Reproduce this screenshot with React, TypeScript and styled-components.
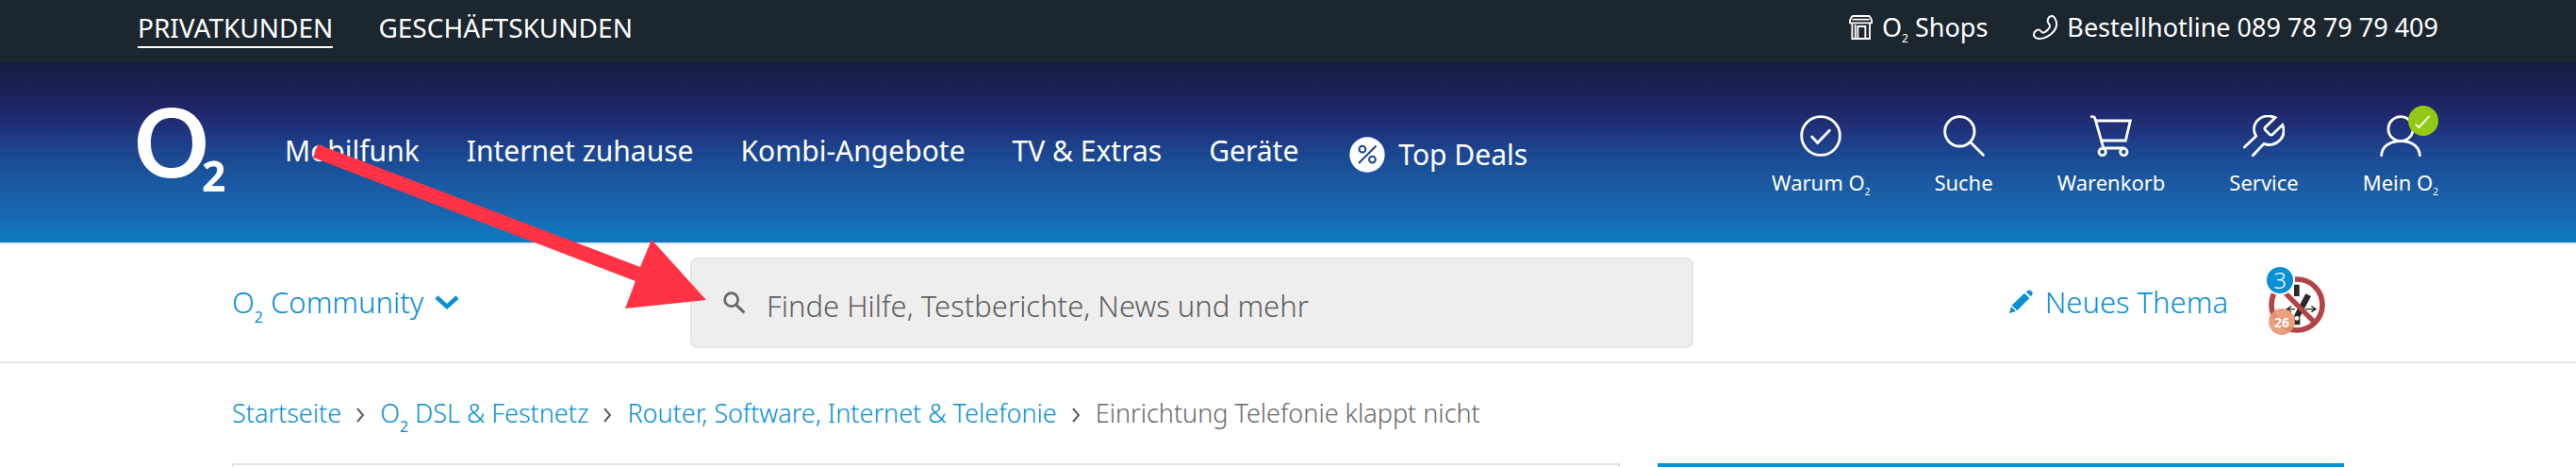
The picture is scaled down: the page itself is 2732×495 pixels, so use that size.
import React from "react";
import styled, { createGlobalStyle, css } from "styled-components";

const BLUE = "#0890d0";
const GREY = "#696969";
const LINE = "#e4e4e4";

const GlobalStyle = createGlobalStyle`
  *, *::before, *::after { box-sizing: border-box; }
  body {
    margin: 0;
    background: #fff;
    font-family: "Noto Sans", "Open Sans", sans-serif;
    font-weight: 400;
    overflow-x: hidden;
  }
  a { color: inherit; text-decoration: none; white-space: nowrap; }
  svg { display: block; flex: none; }
`;

const Container = styled.div<{ $max: number }>`
  width: calc(100% - 32px);
  max-width: ${(p) => p.$max}px;
  margin: 0 auto;
`;

const Sub = styled.span<{ $size: number; $drop: number }>`
  font-size: ${(p) => p.$size}px;
  font-weight: 400;
  line-height: 0;
  vertical-align: -${(p) => p.$drop}px;
`;

/* Top bar */

const TopBar = styled.div`
  background: #1b262f;
  color: #fff;
`;

const TopBarRow = styled(Container)`
  display: flex;
  justify-content: space-between;
  padding: 11px 0 15px;
`;

const TopBarGroup = styled.nav<{ $size: number }>`
  display: flex;
  gap: 48px;
  font-size: ${(p) => p.$size}px;
`;

const TopBarLink = styled.a<{ $active?: boolean }>`
  display: flex;
  align-items: center;
  gap: 10px;
  line-height: 36px;
  padding-bottom: 2px;
  border-bottom: 2px solid ${(p) => (p.$active ? "#fff" : "transparent")};
`;

/* Main header */

const Header = styled.header`
  color: #fff;
  background: linear-gradient(
    #161c40 0%,
    #1d2053 15%,
    #1f2363 23%,
    #1f317a 36%,
    #1c4690 50%,
    #1a5aa3 68%,
    #1867b0 84%,
    #0f76bc 94%,
    #0f78bd 100%
  );
  border-bottom: 2px solid #d8e9f4;
`;

const HeaderRow = styled(Container)`
  position: relative;
  display: flex;
  align-items: flex-start;
  padding: 46px 0 48px;
`;

const LogoLink = styled.a`
  padding-top: 2px;
  margin-right: 56px;
`;

const MainNav = styled.nav`
  display: flex;
  gap: 50px;
  padding-top: 28px;
`;

const navText = css`
  font-size: 30px;
`;

const NavLink = styled.a`
  ${navText}
  line-height: 40px;
`;

const DealsLink = styled.a`
  ${navText}
  display: flex;
  align-items: center;
  gap: 14px;
  line-height: 48px;
  padding-left: 4px;
`;

const Actions = styled.nav`
  display: flex;
  gap: 68px;
  margin-left: auto;
  padding-top: 10px;
`;

const Action = styled.a`
  display: flex;
  flex-direction: column;
  align-items: center;
  gap: 11px;
  font-size: 22px;
  line-height: 32px;
`;

const ActionIcon = styled.span`
  position: relative;
`;

const DoneBadge = styled.span`
  position: absolute;
  top: -10px;
  right: -18px;
`;

const Arrow = styled.svg`
  position: absolute;
  z-index: 2;
  left: 186px;
  top: 86px;
  pointer-events: none;
`;

/* Community bar */

const CommunityBar = styled.div`
  border-bottom: 2px solid ${LINE};
`;

const CommunityRow = styled(Container)`
  display: grid;
  grid-template-columns: 486px minmax(0, 1064px) 1fr;
  align-items: center;
  padding: 14px 0;
`;

const CommunityButton = styled.button`
  display: flex;
  align-items: center;
  justify-self: start;
  gap: 12px;
  border: 0;
  background: none;
  padding: 0 0 2px;
  font: inherit;
  font-size: 31px;
  font-weight: 300;
  line-height: 40px;
  color: ${BLUE};
  white-space: nowrap;
`;

const SearchBox = styled.label`
  display: flex;
  align-items: center;
  gap: 22px;
  height: 96px;
  padding: 0 33px;
  border: 2px solid ${LINE};
  border-radius: 8px;
  background: #eee;
`;

const SearchInput = styled.input`
  flex: 1;
  min-width: 0;
  border: 0;
  padding: 6px 0 0;
  background: none;
  outline: none;
  font: inherit;
  font-size: 31px;
  font-weight: 300;
  line-height: 40px;
  color: #5f5f5f;
  &::placeholder { color: #5f5f5f; opacity: 1; }
`;

const UserTools = styled.div`
  display: flex;
  align-items: center;
  justify-content: flex-end;
  gap: 43px;
  padding-right: 20px;
`;

const NewTopic = styled.a`
  display: flex;
  align-items: center;
  gap: 12px;
  padding-bottom: 2px;
  font-size: 31px;
  font-weight: 300;
  line-height: 40px;
  color: ${BLUE};
`;

const AvatarLink = styled.a`
  position: relative;
  padding-top: 4px;
`;

const badge = css`
  position: absolute;
  display: flex;
  align-items: center;
  justify-content: center;
  border-radius: 50%;
  color: #fff;
`;

const CountBadge = styled.span`
  ${badge}
  left: -4px;
  top: -8px;
  width: 32px;
  height: 32px;
  border: 2px solid #fff;
  background: ${BLUE};
  font-size: 24px;
  font-weight: 300;
  line-height: 28px;
`;

const PointsBadge = styled.span`
  ${badge}
  left: 0;
  bottom: -2px;
  width: 28px;
  height: 28px;
  background: rgba(232, 150, 115, 0.9);
  font-size: 14px;
  font-weight: 700;
`;

/* Breadcrumb and content */

const Breadcrumb = styled.ol`
  display: flex;
  flex-wrap: wrap;
  list-style: none;
  margin: 0;
  padding: 35px 0;
  font-size: 27px;
  font-weight: 300;
  line-height: 36px;
`;

const Crumb = styled.li`
  display: flex;
  align-items: center;
  color: ${GREY};
  a { color: ${BLUE}; }
  svg { margin: 3px 16px 0; }
`;

const Columns = styled.div`
  display: grid;
  grid-template-columns: minmax(0, 1472fr) minmax(0, 728fr);
  gap: 40px;
`;

const Post = styled.main`
  min-height: 4px;
  border: 2px solid ${LINE};
  border-bottom: 0;
`;

const Sidebar = styled.aside`
  border-top: 4px solid ${BLUE};
`;

/* Drawings */

const Logo = () => (
  <svg width="100" height="95" viewBox="0 0 100 95" fill="#fff" overflow="visible" role="img" aria-label="O2">
    <path
      fillRule="evenodd"
      d="M36 0C14 0 0 16 0 37.500S14 75 36 75S72 59 72 37.500S58 0 36 0ZM36 11C50 11 58 21 58 37.500S50 64 36 64S14 54 14 37.500S22 11 36 11Z"
    />
    <text x="68" y="89" fontFamily="Noto Sans" fontSize="44" fontWeight="700">2</text>
  </svg>
);

const ShopIcon = () => (
  <svg width="25" height="26" viewBox="0 0 75 78" fill="none" stroke="#fff" strokeWidth="5.500">
    <path d="M13 3H62Q66 3 68 8L72 16V25H3V16L7 8Q9 3 13 3Z M10 14H65 M10 25V75H66V25 M28 75V36H52V75 M20 30V72" />
  </svg>
);

const PhoneIcon = () => (
  <svg width="26" height="26" viewBox="0 0 78 78" fill="none" stroke="#fff" strokeWidth="6" strokeLinejoin="round">
    <path d="M59 3C67 1 77 18 75 33C72 54 45 74 22 75C12 76 1 69 3 60C5 51 15 44 22 48C27 51 28 57 34 56C43 53 53 43 54 35C55 29 46 25 47 18C48 10 53 4 59 3Z" />
  </svg>
);

const PercentIcon = () => (
  <svg width="38" height="38" viewBox="0 0 112 112" fill="none" stroke="#1c4690" strokeWidth="6" strokeLinecap="round">
    <circle cx="56" cy="56" r="55" fill="#fff" stroke="none" />
    <circle cx="41" cy="39" r="10" />
    <circle cx="72" cy="71" r="10" />
    <path d="M31 81L82 30" />
  </svg>
);

const LineIcon = ({ children }: { children: React.ReactNode }) => (
  <svg
    width="44"
    height="44"
    viewBox="0 0 132 132"
    fill="none"
    stroke="#fff"
    strokeWidth="8.500"
    strokeLinecap="round"
  >
    {children}
  </svg>
);

const WhyIcon = () => (
  <LineIcon>
    <circle cx="66" cy="66" r="61" />
    <path d="M38 69L56 88L94 49" />
  </LineIcon>
);

const FindIcon = () => (
  <LineIcon>
    <circle cx="52" cy="52" r="47" />
    <path d="M87 87L127 127" />
  </LineIcon>
);

const CartIcon = () => (
  <LineIcon>
    <path d="M4 5Q13 4 15 12L42 107M17 18H127L112 81H36M40 105H106" />
    <circle cx="38" cy="117" r="11" />
    <circle cx="106" cy="117" r="11" />
  </LineIcon>
);

const ServiceIcon = () => (
  <LineIcon>
    <path d="M4 102L41 67C31 50 33 30 47 16C62 2 83 0 102 8L70 39Q67 43 70 47L85 62Q89 65 93 62L125 31C132 47 130 65 118 79C104 94 83 98 66 91L31 128" />
  </LineIcon>
);

const PersonIcon = () => (
  <LineIcon>
    <circle cx="66" cy="44" r="39" />
    <path d="M5 128C6 101 28 83 66 83S126 101 127 128" />
  </LineIcon>
);

const DoneIcon = () => (
  <svg width="32" height="32" viewBox="0 0 96 96" fill="none">
    <circle cx="48" cy="48" r="48" fill="#92c915" />
    <path d="M25 61L34 69L66 35" stroke="#fff" strokeWidth="5.500" strokeLinecap="round" />
  </svg>
);

const ChevronDown = () => (
  <svg width="26" height="15" viewBox="0 0 26 15" fill="none" stroke={BLUE} strokeWidth="4.500">
    <path d="M2 2L13 12L24 2" />
  </svg>
);

const MagnifierIcon = () => (
  <svg width="24" height="24" viewBox="0 0 72 72" fill="none" stroke="#666" strokeWidth="8">
    <circle cx="26" cy="26" r="21" />
    <path d="M42 43L67 67" strokeWidth="9" />
  </svg>
);

const PencilIcon = () => (
  <svg width="26" height="26" viewBox="0 0 78 78" fill={BLUE}>
    <path d="M0 75L6 54L21 69ZM9 49L48 11L64 27L26 65Q23 67 22 63Q21 60 17 59Q14 59 14 56Q14 53 10 53ZM53 7L59 3Q64 0 69 4L72 7Q76 12 73 16L69 22Z" />
  </svg>
);

const AvatarIcon = () => (
  <svg width="60" height="60" viewBox="0 0 180 180">
    <circle cx="90" cy="90" r="81" fill="#fff" />
    <g fill="#2b2827">
      <path d="M81 26H98V63H81Z M118 55L135 63L100 128V154H82V122Z" />
    </g>
    <path d="M58 104H84M72 95L58 104L72 113M118 104H150M136 95L150 104L136 113" fill="none" stroke="#2b2827" strokeWidth="4" />
    <circle cx="90" cy="133" r="7" fill="#fff" />
    <path d="M34 34L146 146" stroke="#b14545" strokeWidth="16" />
    <circle cx="90" cy="90" r="81" fill="none" stroke="#b14545" strokeWidth="17" />
  </svg>
);

const CrumbChevron = () => (
  <svg width="9" height="16" viewBox="0 0 9 16" fill="none" stroke="#5f5f5f" strokeWidth="2">
    <path d="M1 1L7 8L1 15" />
  </svg>
);

export default function App() {
  return (
    <>
      <GlobalStyle />
      <TopBar>
        <TopBarRow $max={2440}>
          <TopBarGroup $size={28}>
            <TopBarLink href="#" $active>PRIVATKUNDEN</TopBarLink>
            <TopBarLink href="#">GESCHÄFTSKUNDEN</TopBarLink>
          </TopBarGroup>
          <TopBarGroup $size={27}>
            <TopBarLink href="#">
              <ShopIcon />
              <span>O<Sub $size={12} $drop={6}>2</Sub> Shops</span>
            </TopBarLink>
            <TopBarLink href="#">
              <PhoneIcon />
              <span>Bestellhotline 089 78 79 79 409</span>
            </TopBarLink>
          </TopBarGroup>
        </TopBarRow>
      </TopBar>

      <Header>
        <HeaderRow $max={2440}>
          <LogoLink href="#"><Logo /></LogoLink>
          <MainNav>
            <NavLink href="#">Mobilfunk</NavLink>
            <NavLink href="#">Internet zuhause</NavLink>
            <NavLink href="#">Kombi-Angebote</NavLink>
            <NavLink href="#">TV &amp; Extras</NavLink>
            <NavLink href="#">Geräte</NavLink>
            <DealsLink href="#"><PercentIcon /><span>Top Deals</span></DealsLink>
          </MainNav>
          <Actions>
            <Action href="#">
              <ActionIcon><WhyIcon /></ActionIcon>
              <span>Warum O<Sub $size={10} $drop={5}>2</Sub></span>
            </Action>
            <Action href="#">
              <ActionIcon><FindIcon /></ActionIcon>
              <span>Suche</span>
            </Action>
            <Action href="#">
              <ActionIcon><CartIcon /></ActionIcon>
              <span>Warenkorb</span>
            </Action>
            <Action href="#">
              <ActionIcon><ServiceIcon /></ActionIcon>
              <span>Service</span>
            </Action>
            <Action href="#">
              <ActionIcon>
                <PersonIcon />
                <DoneBadge><DoneIcon /></DoneBadge>
              </ActionIcon>
              <span>Mein O<Sub $size={10} $drop={5}>2</Sub></span>
            </Action>
          </Actions>
          <Arrow width="420" height="178" viewBox="0 0 420 178" fill="#ff3345" aria-hidden="true">
            <path d="M5 1L347 131L359 102L417 166L331 175L342 146L0 15Z" />
          </Arrow>
        </HeaderRow>
      </Header>

      <CommunityBar>
        <CommunityRow $max={2240}>
          <CommunityButton type="button">
            <span>O<Sub $size={16} $drop={10}>2</Sub> Community</span>
            <ChevronDown />
          </CommunityButton>
          <SearchBox>
            <MagnifierIcon />
            <SearchInput
              type="text"
              aria-label="Finde Hilfe, Testberichte, News und mehr"
              placeholder="Finde Hilfe, Testberichte, News und mehr"
            />
          </SearchBox>
          <UserTools>
            <NewTopic href="#"><PencilIcon /><span>Neues Thema</span></NewTopic>
            <AvatarLink href="#">
              <AvatarIcon />
              <PointsBadge>26</PointsBadge>
              <CountBadge>3</CountBadge>
            </AvatarLink>
          </UserTools>
        </CommunityRow>
      </CommunityBar>

      <Container $max={2240}>
        <Breadcrumb>
          <Crumb><a href="#">Startseite</a><CrumbChevron /></Crumb>
          <Crumb>
            <a href="#">O<Sub $size={16} $drop={10}>2</Sub> DSL &amp; Festnetz</a>
            <CrumbChevron />
          </Crumb>
          <Crumb><a href="#">Router, Software, Internet &amp; Telefonie</a><CrumbChevron /></Crumb>
          <Crumb>Einrichtung Telefonie klappt nicht</Crumb>
        </Breadcrumb>
        <Columns>
          <Post />
          <Sidebar />
        </Columns>
      </Container>
    </>
  );
}
